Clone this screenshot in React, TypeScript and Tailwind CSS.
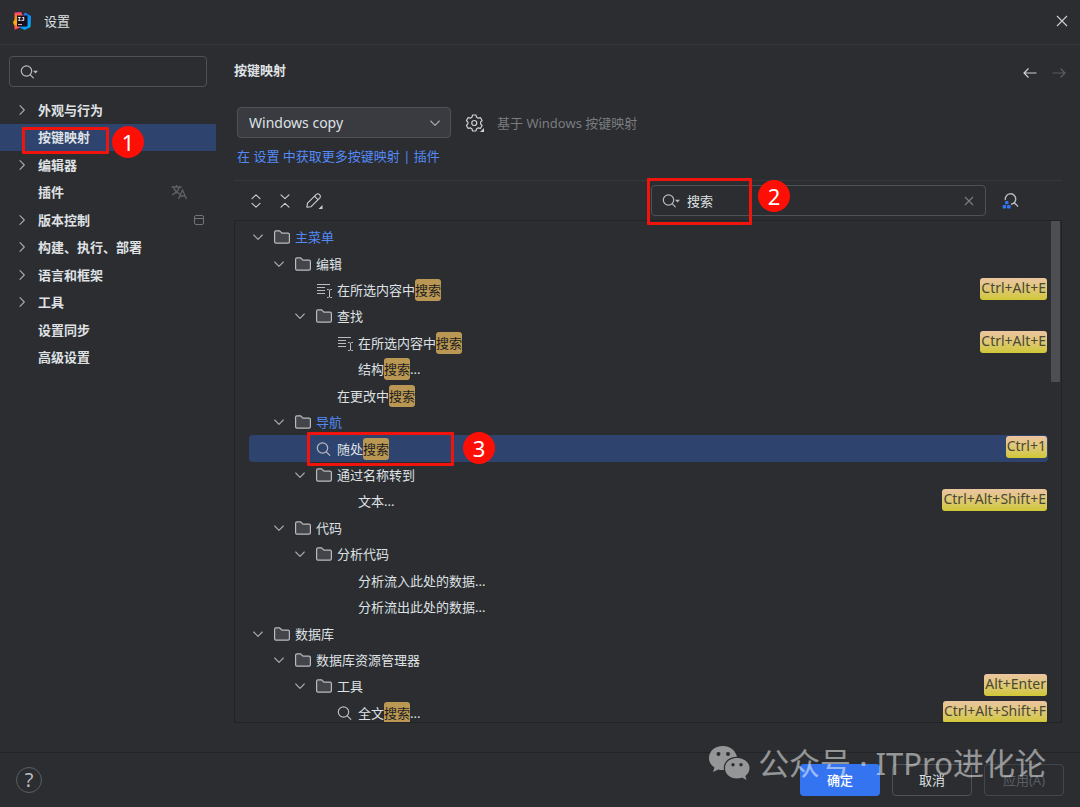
import { useState } from 'react';
import clsx from 'clsx';

const categories = [
  { id: 'appearance', name: '外观与行为', expandable: true },
  { id: 'keymap', name: '按键映射' },
  { id: 'editor', name: '编辑器', expandable: true },
  { id: 'plugins', name: '插件', badge: 'translate' },
  { id: 'vcs', name: '版本控制', expandable: true, badge: 'project' },
  { id: 'build', name: '构建、执行、部署', expandable: true },
  { id: 'languages', name: '语言和框架', expandable: true },
  { id: 'tools', name: '工具', expandable: true },
  { id: 'sync', name: '设置同步' },
  { id: 'advanced', name: '高级设置' },
];

type Action = {
  depth: number;
  name: string;
  kind?: 'folder' | 'text' | 'search';
  link?: boolean;
  shortcut?: string;
  selected?: boolean;
};

const actions: Action[] = [
  { depth: 0, name: '主菜单', kind: 'folder', link: true },
  { depth: 1, name: '编辑', kind: 'folder' },
  { depth: 2, name: '在所选内容中搜索', kind: 'text', shortcut: 'Ctrl+Alt+E' },
  { depth: 2, name: '查找', kind: 'folder' },
  { depth: 3, name: '在所选内容中搜索', kind: 'text', shortcut: 'Ctrl+Alt+E' },
  { depth: 3, name: '结构搜索...' },
  { depth: 2, name: '在更改中搜索' },
  { depth: 1, name: '导航', kind: 'folder', link: true },
  { depth: 2, name: '随处搜索', kind: 'search', shortcut: 'Ctrl+1', selected: true },
  { depth: 2, name: '通过名称转到', kind: 'folder' },
  { depth: 3, name: '文本...', shortcut: 'Ctrl+Alt+Shift+E' },
  { depth: 1, name: '代码', kind: 'folder' },
  { depth: 2, name: '分析代码', kind: 'folder' },
  { depth: 3, name: '分析流入此处的数据...' },
  { depth: 3, name: '分析流出此处的数据...' },
  { depth: 0, name: '数据库', kind: 'folder' },
  { depth: 1, name: '数据库资源管理器', kind: 'folder' },
  { depth: 2, name: '工具', kind: 'folder', shortcut: 'Alt+Enter' },
  { depth: 3, name: '全文搜索...', kind: 'search', shortcut: 'Ctrl+Alt+Shift+F' },
];

const indents = ['pl-px', 'pl-[22px]', 'pl-[43px]', 'pl-[64px]'];

function Logo() {
  return (
    <svg width="18" height="18" viewBox="0 0 18 18" aria-hidden="true">
      <defs>
        <linearGradient id="warm" x1="0" y1="0" x2="0" y2="1">
          <stop offset="0" stopColor="#ff318c" />
          <stop offset="0.25" stopColor="#fc801d" />
          <stop offset="0.6" stopColor="#fdb60d" />
          <stop offset="1" stopColor="#fe2870" />
        </linearGradient>
        <linearGradient id="cool" x1="0" y1="0" x2="1" y2="1">
          <stop offset="0" stopColor="#8f5bff" />
          <stop offset="0.4" stopColor="#087cfa" />
          <stop offset="1" stopColor="#07c3f2" />
        </linearGradient>
      </defs>
      <path d="M1.5 0.5 L8 0 L11 6 L8 15 L1.5 18 L1.5 14 L0 10.5 L1.5 7.5 Z" fill="url(#warm)" />
      <path d="M12 0.5 L18 4 L17.5 15 L11.5 18 L6.5 15.5 L9 6 Z" fill="url(#cool)" />
      <rect x="4" y="3.5" width="10.5" height="11" fill="#1a0f1c" />
      <text x="4.5" y="9" fontSize="6" fontWeight="700" fill="#fff" fontFamily="Liberation Mono, monospace">IJ</text>
      <rect x="5" y="12" width="4" height="1" fill="#c9b4c0" />
    </svg>
  );
}

function Chevron({ down }: { down?: boolean }) {
  return (
    <svg width="16" height="16" viewBox="0 0 16 16" fill="none" stroke="#a9abb0" strokeWidth="1.1" className="shrink-0" aria-hidden="true">
      <path d={down ? 'M3.7 6 L8 10.3 L12.3 6' : 'M6 3.7 L10.3 8 L6 12.3'} strokeLinecap="round" strokeLinejoin="round" />
    </svg>
  );
}

function Magnifier() {
  return (
    <svg width="16" height="16" viewBox="0 0 16 16" fill="none" stroke="#b9bbc0" strokeWidth="1.2" strokeLinecap="round" aria-hidden="true">
      <circle cx="6.5" cy="7" r="5.2" />
      <path d="M10.3 10.8 L13.8 14.3" />
    </svg>
  );
}

function MagnifierMenu() {
  return (
    <svg width="20" height="16" viewBox="0 0 20 16" fill="none" stroke="#b9bbc0" strokeWidth="1.2" strokeLinecap="round" className="shrink-0" aria-hidden="true">
      <circle cx="6.5" cy="7" r="5.2" />
      <path d="M10.3 10.8 L13.3 13.8" />
      <path d="M13 6.800 H18 L15.500 9.400 Z" fill="#b9bbc0" stroke="none" />
    </svg>
  );
}

function ActionIcon({ kind }: { kind: Action['kind'] }) {
  if (kind === 'search') return <Magnifier />;
  if (kind === 'folder') {
    return (
      <svg width="16" height="16" viewBox="0 0 16 16" aria-hidden="true">
        <path
          d="M0.6 3.2 Q0.6 1.8 2 1.8 H5.6 L8 4.2 H14 Q15.4 4.2 15.4 5.6 V12.8 Q15.4 14.200 14 14.200 H2 Q0.6 14.200 0.6 12.800 Z"
          fill="#43454a"
          stroke="#b9bbc0"
          strokeWidth="1.2"
        />
      </svg>
    );
  }
  if (kind === 'text') {
    return (
      <svg width="16" height="16" viewBox="0 0 16 16" fill="none" stroke="#b9bbc0" aria-hidden="true">
        <path d="M1 2.5 H14 M1 5.5 H9 M1 8.5 H9 M1 11.5 H9" />
        <path d="M11 7.5 H12.3 L13.5 8.2 L14.7 7.5 H16 M11 15.5 H12.3 L13.5 14.8 L14.7 15.5 H16 M13.5 8 V15" />
      </svg>
    );
  }
  return null;
}

function Callout({ className, children }: { className: string; children: string }) {
  return (
    <span
      className={clsx(
        'pointer-events-none absolute z-10 flex size-8 items-center justify-center rounded-full bg-[#fd0f06] text-[22px] font-normal leading-none text-white',
        className,
      )}
    >
      {children}
    </span>
  );
}

function Frame({ className }: { className: string }) {
  return <span className={clsx('pointer-events-none absolute z-10 rounded-[1px] border-[3px] border-[#f0140c]', className)} />;
}

// Marks every occurrence of the query in an action name
function Highlighted({ text, query }: { text: string; query: string }) {
  if (!query) return <>{text}</>;
  return (
    <>
      {text.split(query).map((part, index) => (
        <span key={index}>
          {index > 0 && (
            <mark className="inline-block h-[22px] rounded-[3px] bg-[#ba9752] leading-[22px] text-[#1e1f22]">{query}</mark>
          )}
          {part}
        </span>
      ))}
    </>
  );
}

function Sidebar() {
  return (
    <aside className="w-[216px] shrink-0 pt-[11px]">
      <label className="ml-[9px] mr-[9px] flex h-[31px] items-center rounded border border-[#4e5157] pl-[10px] focus-within:border-[#3574f0]">
        <MagnifierMenu />
        <input type="search" aria-label="搜索设置" className="w-full bg-transparent px-1 outline-none" />
      </label>
      <ul className="mt-[9px] grid h-[275px] auto-rows-fr font-semibold">
        {categories.map(category => (
          <li key={category.id} className="relative">
            <button
              type="button"
              className={clsx(
                'flex h-full w-full items-center pl-[14px] pr-[11px] text-left',
                category.id === 'keymap' && 'bg-[#2e436e]',
              )}
            >
              <span className="w-6 shrink-0">{category.expandable && <Chevron />}</span>
              <span className="flex-1">{category.name}</span>
              {category.badge === 'translate' && (
                <svg width="16" height="16" viewBox="0 0 16 16" fill="none" stroke="#5f6267" strokeWidth="1.3" className="mr-[18px]" aria-hidden="true">
                  <path d="M0.5 3 H10.5 M5.5 1 V3 M2.5 3 Q4 8 9 10 M8.5 3 Q7 8 1 11" />
                  <path d="M7.5 15 L11.5 6 L15.5 15 M9 12 H14" />
                </svg>
              )}
              {category.badge === 'project' && (
                <svg width="12" height="12" viewBox="0 0 12 12" fill="none" stroke="#6f737a" aria-hidden="true">
                  <rect x="1.5" y="1.5" width="9" height="9" rx="1.5" />
                  <path d="M1.5 4.5 H10.5" />
                </svg>
              )}
            </button>
            {category.id === 'keymap' && (
              <>
                <Frame className="left-[22px] top-[3px] h-[27px] w-[87px]" />
                <Callout className="left-[112px] top-[2px]">1</Callout>
              </>
            )}
          </li>
        ))}
      </ul>
    </aside>
  );
}

function Toolbar({ query, onQueryChange }: { query: string; onQueryChange: (value: string) => void }) {
  return (
    <div className="flex h-10 shrink-0 items-center border-t border-[#36383c] pl-[14px]">
      <div className="flex gap-[13px]">
        <button type="button" aria-label="全部展开">
          <svg width="16" height="16" viewBox="0 0 16 16" fill="none" stroke="#ced0d6" strokeWidth="1.1" strokeLinecap="round" strokeLinejoin="round">
            <path d="M4 5.6 L8 1.8 L12 5.6 M4 10.4 L8 14.2 L12 10.4" />
          </svg>
        </button>
        <button type="button" aria-label="全部收起">
          <svg width="16" height="16" viewBox="0 0 16 16" fill="none" stroke="#ced0d6" strokeWidth="1.1" strokeLinecap="round" strokeLinejoin="round">
            <path d="M4 1.8 L8 5.6 L12 1.8 M4 14.2 L8 10.4 L12 14.2" />
          </svg>
        </button>
        <button type="button" aria-label="编辑快捷键">
          <svg width="18" height="18" viewBox="0 0 18 18" fill="none" stroke="#ced0d6" strokeWidth="1.1" strokeLinejoin="round">
            <path d="M0.9 15.200 L1.5 11.200 L10.300 2.400 Q12 1 13.600 2.600 Q15.200 4.200 13.900 5.900 L5.100 14.700 Z M8.500 4.200 L12.100 7.800" />
            <path d="M16.500 13 V17 H12.500 Z" fill="#ced0d6" stroke="none" />
          </svg>
        </button>
      </div>
      <div className="relative ml-auto w-[335px]">
        <div className="flex h-[31px] items-center rounded border border-[#4e5157] pl-[10px] pr-[10px]">
          <MagnifierMenu />
          <input
            type="text"
            aria-label="搜索操作"
            value={query}
            onChange={e => onQueryChange(e.target.value)}
            className="min-w-0 flex-1 bg-transparent px-[5px] outline-none"
          />
          <button type="button" aria-label="清除" onClick={() => onQueryChange('')}>
            <svg width="12" height="12" viewBox="0 0 12 12" stroke="#7a7d83" strokeWidth="1.1">
              <path d="M2 2 L10 10 M10 2 L2 10" />
            </svg>
          </button>
        </div>
        <Frame className="-left-1 -top-[7px] h-[47px] w-[105px]" />
        <Callout className="-top-[5px] left-[107px]">2</Callout>
      </div>
      <button type="button" aria-label="按快捷键查找" className="ml-4 mr-[43px]">
        <svg width="17" height="17" viewBox="0 0 17 17" fill="none">
          <path d="M3.4 8 A5.2 5.2 0 1 1 9 12.2 M12.3 10.7 L16 14.4" stroke="#b9bbc0" strokeWidth="1.4" />
          <g fill="#3574f0">
            <rect x="3" y="9" width="3.5" height="3.2" rx="1" />
            <rect x="0.6" y="13" width="3.6" height="3.4" rx="1" />
            <rect x="5" y="13" width="3.6" height="3.4" rx="1" />
          </g>
        </svg>
      </button>
    </div>
  );
}

function ActionTree({ query }: { query: string }) {
  return (
    <div className="relative min-h-0 flex-1 overflow-hidden border border-[#222326] pl-[14px] pr-[13px]">
      <ul role="tree" className="grid h-[505px] auto-rows-fr pt-[3px]">
        {actions.map((action, index) => (
          <li
            key={index}
            role="treeitem"
            aria-selected={!!action.selected}
            className={clsx('relative flex items-center rounded', indents[action.depth], action.selected && 'bg-[#2e436e]')}
          >
            <span className="w-6 shrink-0">{action.kind === 'folder' && <Chevron down />}</span>
            <span className="mr-[5px] w-4 shrink-0">
              <ActionIcon kind={action.kind} />
            </span>
            <span className={clsx('flex-1', action.link && 'text-[#548af7]')}>
              <Highlighted text={action.name} query={query} />
            </span>
            {action.shortcut && (
              <kbd className="mr-px mt-px h-[22px] self-start rounded-[3px] bg-linear-to-b from-[#ecc5a0] to-[#d0c832] px-px font-[inherit] text-[14px] leading-5 text-[#4a4834]">
                {action.shortcut}
              </kbd>
            )}
            {action.selected && (
              <>
                <Frame className="-top-[3px] left-[58px] h-[34px] w-[147px]" />
                <Callout className="-top-[3px] left-[214px]">3</Callout>
              </>
            )}
          </li>
        ))}
      </ul>
      <div className="absolute right-px top-0 h-[161px] w-[9px] bg-[#4d4e51]" />
    </div>
  );
}

function Watermark() {
  return (
    <div className="pointer-events-none absolute right-[34px] top-[-14px] flex items-center gap-2 text-[31px] leading-[48px] text-white opacity-50">
      <svg width="42" height="36" viewBox="0 0 42 36" fill="#fff" aria-hidden="true">
        <path
          fillRule="evenodd"
          d="M15 1 C6.5 1 1 6.500 1 13 C1 17 3 20.300 6.500 22.500 L5 27 L10.300 24.400 C12 25 14 25.200 16 25.100 C14.500 17.500 21 11.500 29 11.800 C27.500 5.500 22 1 15 1 Z M10.500 7 A2 2 0 1 1 10.500 11 A2 2 0 1 1 10.500 7 Z M20 7 A2 2 0 1 1 20 11 A2 2 0 1 1 20 7 Z"
        />
        <path
          fillRule="evenodd"
          d="M29 13 C22 13 17 17.500 17 23 C17 29 22 33.500 29 33.500 C31 33.500 32.500 33.200 34 32.600 L38.500 35 L37.300 31 C40 29 41.500 26.300 41.500 23 C41.500 17.500 36 13 29 13 Z M25 18 A1.700 1.700 0 1 1 25 21.400 A1.700 1.700 0 1 1 25 18 Z M33 18 A1.700 1.700 0 1 1 33 21.400 A1.700 1.700 0 1 1 33 18 Z"
        />
      </svg>
      <span className="whitespace-nowrap">公众号 · ITPro进化论</span>
    </div>
  );
}

export default function App() {
  const [query, setQuery] = useState('搜索');
  const [keymap, setKeymap] = useState('Windows copy');

  return (
    <div className="flex h-screen flex-col overflow-hidden bg-[#2b2d30] font-['Noto_Sans','Noto_Sans_CJK_SC',sans-serif] text-[13px] leading-5 text-[#dfe1e5]">
      <header className="flex h-[45px] shrink-0 items-center border-b border-[#36383c] pb-[2px] pl-[13px] pr-[11px]">
        <Logo />
        <h1 className="ml-[13px] flex-1">设置</h1>
        <button type="button" aria-label="关闭">
          <svg width="14" height="14" viewBox="0 0 14 14" stroke="#ced0d6" strokeWidth="1.1">
            <path d="M2 2 L12 12 M12 2 L2 12" />
          </svg>
        </button>
      </header>

      <div className="flex min-h-0 flex-1">
        <Sidebar />
        <main className="flex min-w-0 flex-1 flex-col pb-[29px] pl-[18px] pr-[18px]">
          <div className="flex h-[52px] shrink-0 items-center pb-[2px]">
            <h2 className="flex-1 font-semibold">按键映射</h2>
            <div className="mr-[-5px] flex gap-[13px] pt-[6px]">
              <button type="button" aria-label="后退">
                <svg width="16" height="16" viewBox="0 0 16 16" fill="none" stroke="#ced0d6" strokeWidth="1.2">
                  <path d="M14.500 8 H2 M6.500 3.500 L2 8 L6.500 12.500" />
                </svg>
              </button>
              <button type="button" aria-label="前进" disabled>
                <svg width="16" height="16" viewBox="0 0 16 16" fill="none" stroke="#5a5d63" strokeWidth="1.2">
                  <path d="M1.500 8 H14 M9.500 3.500 L14 8 L9.500 12.500" />
                </svg>
              </button>
            </div>
          </div>

          <div className="ml-[3px] mt-[10px] flex shrink-0 items-center">
            <div className="relative w-[214px]">
              <select
                aria-label="按键映射方案"
                value={keymap}
                onChange={e => setKeymap(e.target.value)}
                className="h-[31px] w-full appearance-none rounded border border-[#4e5157] bg-[#393b40] pl-[11px] text-[14px] outline-none"
              >
                <option>Windows copy</option>
                <option>Windows</option>
              </select>
              <span className="pointer-events-none absolute right-2 top-2">
                <Chevron down />
              </span>
            </div>
            <button type="button" aria-label="方案操作" className="ml-[14px]">
              <svg width="20" height="20" viewBox="0 0 20 20" fill="none" stroke="#ced0d6" strokeWidth="1.2" strokeLinejoin="round">
                <path d="M7.600 2 H10.900 L11.600 4.200 L13.300 5.200 L15.500 4.700 L17.100 7.500 L15.600 9.200 V10.800 L17.100 12.500 L15.500 15.300 L13.300 14.800 L11.600 15.800 L10.900 18 H7.600 L6.900 15.800 L5.200 14.800 L3 15.300 L1.400 12.500 L2.900 10.800 V9.200 L1.400 7.500 L3 4.700 L5.200 5.200 L6.900 4.200 Z" />
                <circle cx="9.250" cy="10" r="2.500" />
                <path d="M19 15 V19 H15 Z" fill="#ced0d6" stroke="none" />
              </svg>
            </button>
            <span className="ml-3 text-[#7a7c80]">基于 Windows 按键映射</span>
          </div>

          <p className="mb-[14px] ml-[3px] mt-2 shrink-0 text-[#548af7]">
            <a href="#plugins">在 设置 中获取更多按键映射 | 插件</a>
          </p>

          <Toolbar query={query} onQueryChange={setQuery} />
          <ActionTree query={query} />
        </main>
      </div>

      <footer className="relative flex h-[55px] shrink-0 items-center gap-3 border-t border-[#232427] px-4">
        <button type="button" aria-label="帮助" className="mr-auto size-[26px] rounded-full border border-[#5a5d63] text-[20px] leading-6 text-[#b9bbc0]">
          ?
        </button>
        <button type="button" className="h-8 w-20 rounded bg-[#3574f0] font-medium text-white">
          确定
        </button>
        <button type="button" className="h-8 w-20 rounded border border-[#4e5157]">
          取消
        </button>
        <button type="button" disabled className="h-8 w-20 rounded border border-[#43454a] text-[#5a5d63]">
          应用(A)
        </button>
        <Watermark />
      </footer>
    </div>
  );
}
